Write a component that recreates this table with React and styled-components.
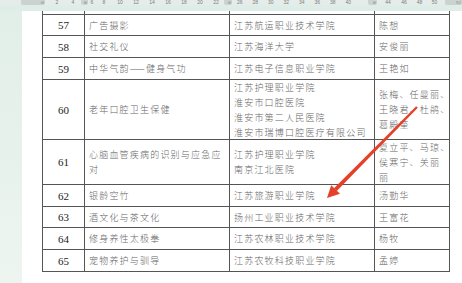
import styled, { createGlobalStyle } from 'styled-components';

const GlobalStyle = createGlobalStyle`
  html, body {
    margin: 0;
    padding: 0;
    overflow: hidden;
    background: #ffffff;
  }
`;

const rulerItems = [
  { kind: 'gap', w: 21 },
  { kind: 'mark', w: 24 },
  { kind: 'gap', w: 4 },
  { kind: 'num', w: 16, label: '2' },
  { kind: 'num', w: 16, label: '4' },
  { kind: 'mark', w: 7 },
  { kind: 'num', w: 8, label: '6' },
  { kind: 'num', w: 16, label: '8' },
  { kind: 'num', w: 16, label: '10' },
  { kind: 'num', w: 16, label: '12' },
  { kind: 'num', w: 16, label: '14' },
  { kind: 'num', w: 16, label: '16' },
  { kind: 'num', w: 16, label: '18' },
  { kind: 'num', w: 16, label: '20' },
  { kind: 'num', w: 16, label: '22' },
  { kind: 'mark', w: 8 },
  { kind: 'num', w: 15.5, label: '26' },
  { kind: 'num', w: 15.5, label: '28' },
  { kind: 'num', w: 15.5, label: '30' },
  { kind: 'num', w: 15.5, label: '32' },
  { kind: 'num', w: 15.5, label: '34' },
  { kind: 'num', w: 15.5, label: '36' },
  { kind: 'num', w: 15.5, label: '38' },
  { kind: 'num', w: 15.5, label: '40' },
  { kind: 'gap', w: 12 },
  { kind: 'mark', w: 9 },
  { kind: 'gap', w: 3 },
  { kind: 'num', w: 16, label: '44' },
  { kind: 'num', w: 16, label: '46' },
  { kind: 'num', w: 15, label: '48' },
  { kind: 'num', w: 15, label: '50' },
  { kind: 'gap', w: 3 },
  { kind: 'mark', w: 17, label: '52' },
];

const rows = [
  { no: '57', h: 21, course: ['广告摄影'], school: ['江苏航运职业技术学院'], people: ['陈想'] },
  { no: '58', h: 22, course: ['社交礼仪'], school: ['江苏海洋大学'], people: ['安俊丽'] },
  { no: '59', h: 22, course: ['中华气韵——健身气功'], school: ['江苏电子信息职业学院'], people: ['王艳如'] },
  {
    no: '60',
    h: 60,
    course: ['老年口腔卫生保健'],
    school: ['江苏护理职业学院', '淮安市口腔医院', '淮安市第二人民医院', '淮安市瑞博口腔医疗有限公司'],
    people: ['张梅、任曼丽、', '王晓君、杜鹃、', '葛殿奎'],
  },
  {
    no: '61',
    h: 45,
    course: ['心脑血管疾病的识别与应急应', '对'],
    school: ['江苏护理职业学院', '南京江北医院'],
    people: ['夏立平、马琼、', '侯寒宁、关丽', '丽'],
  },
  { no: '62', h: 22, course: ['银龄空竹'], school: ['江苏旅游职业学院'], people: ['汤勤华'] },
  { no: '63', h: 21, course: ['酒文化与茶文化'], school: ['扬州工业职业技术学院'], people: ['王富花'] },
  { no: '64', h: 22, course: ['修身养性太极拳'], school: ['江苏农林职业技术学院'], people: ['杨牧'] },
  { no: '65', h: 22, course: ['宠物养护与驯导'], school: ['江苏农牧科技职业学院'], people: ['孟婷'] },
];

function Lines({ items }) {
  return items.map((t, i) => <Line key={i}>{t}</Line>);
}

function Arrow() {
  return (
    <Overlay width="462" height="283" viewBox="0 0 462 283">
      <polygon
        points="417.8,107.8 416.2,106.2 334.0,188.2 336.8,190.9"
        fill="#e5402a"
      />
      <polygon points="327,198 331.2,185.2 340,193.8" fill="#e5402a" />
    </Overlay>
  );
}

export default function App() {
  return (
    <>
      <GlobalStyle />
      <Screen>
        <Ruler>
          {rulerItems.map((it, i) =>
            it.kind === 'mark' ? (
              <RulerMark key={i} $w={it.w}>
                <MarkGlyph>{it.label || '⊞'}</MarkGlyph>
              </RulerMark>
            ) : (
              <RulerNum key={i} $w={it.w}>
                {it.label || ''}
              </RulerNum>
            )
          )}
        </Ruler>
        <Band />
        <Workspace>
          <Gutter />
          <Page>
            <Sheet>
              <Row $h={4}>
                <NoCell />
                <TextCell />
                <TextCell />
                <TextCell />
              </Row>
              {rows.map((r) => (
                <Row key={r.no} $h={r.h}>
                  <NoCell>{r.no}</NoCell>
                  <TextCell>
                    <Lines items={r.course} />
                  </TextCell>
                  <TextCell>
                    <Lines items={r.school} />
                  </TextCell>
                  <TextCell>
                    <Lines items={r.people} />
                  </TextCell>
                </Row>
              ))}
            </Sheet>
          </Page>
        </Workspace>
        <Arrow />
      </Screen>
    </>
  );
}

const Screen = styled.div`
  position: relative;
  width: 462px;
  height: 283px;
  overflow: hidden;
  display: flex;
  flex-direction: column;
  background: #ffffff;
`;

const Ruler = styled.div`
  display: flex;
  height: 5px;
  flex-shrink: 0;
  background: #e6ecea;
  overflow: hidden;
`;

const RulerNum = styled.div`
  width: ${(p) => p.$w}px;
  flex-shrink: 0;
  text-align: center;
  font-family: 'Liberation Sans', Arial, sans-serif;
  font-size: 5px;
  line-height: 5px;
  color: #7a807e;
`;

const RulerMark = styled.div`
  width: ${(p) => p.$w}px;
  flex-shrink: 0;
  background: #cbd3d0;
  border-radius: 0 0 2px 2px;
  display: flex;
  justify-content: flex-end;
  align-items: center;
  overflow: hidden;
`;

const MarkGlyph = styled.span`
  font-family: 'DejaVu Sans', sans-serif;
  font-size: 4px;
  line-height: 5px;
  color: #8e9794;
  padding-right: 1px;
`;

const Band = styled.div`
  height: 6px;
  flex-shrink: 0;
  background: #deede7;
`;

const Workspace = styled.div`
  flex: 1;
  display: flex;
  min-height: 0;
`;

const Gutter = styled.div`
  width: 22px;
  flex-shrink: 0;
  background: linear-gradient(180deg, #e2eee8 0%, #e8f2ec 60%, #eef5f0 100%);
`;

const Page = styled.div`
  flex: 1;
  background: #ffffff;
  padding-left: 20px;
`;

const Sheet = styled.div`
  width: 408px;
  border-left: 1px solid #555555;
  box-sizing: border-box;
`;

const Row = styled.div`
  display: grid;
  grid-template-columns: 42px 145px 145px 75px;
  height: ${(p) => p.$h}px;
  box-sizing: border-box;
  border-bottom: 1px solid #555555;
`;

const Cell = styled.div`
  border-right: 1px solid #555555;
  display: flex;
  flex-direction: column;
  justify-content: center;
  overflow: hidden;
`;

const NoCell = styled(Cell)`
  align-items: center;
  font-family: 'Liberation Serif', 'Times New Roman', serif;
  font-size: 11px;
  color: #1e1e1e;
`;

const TextCell = styled(Cell)`
  padding-left: 4px;
  font-family: 'Noto Sans CJK SC', 'Noto Sans', sans-serif;
  font-size: 9px;
  font-weight: 300;
  letter-spacing: 1.2px;
  color: #666666;
`;

const Line = styled.div`
  line-height: 15px;
  white-space: nowrap;
`;

const Overlay = styled.svg`
  position: absolute;
  top: 0;
  left: 0;
  pointer-events: none;
`;
